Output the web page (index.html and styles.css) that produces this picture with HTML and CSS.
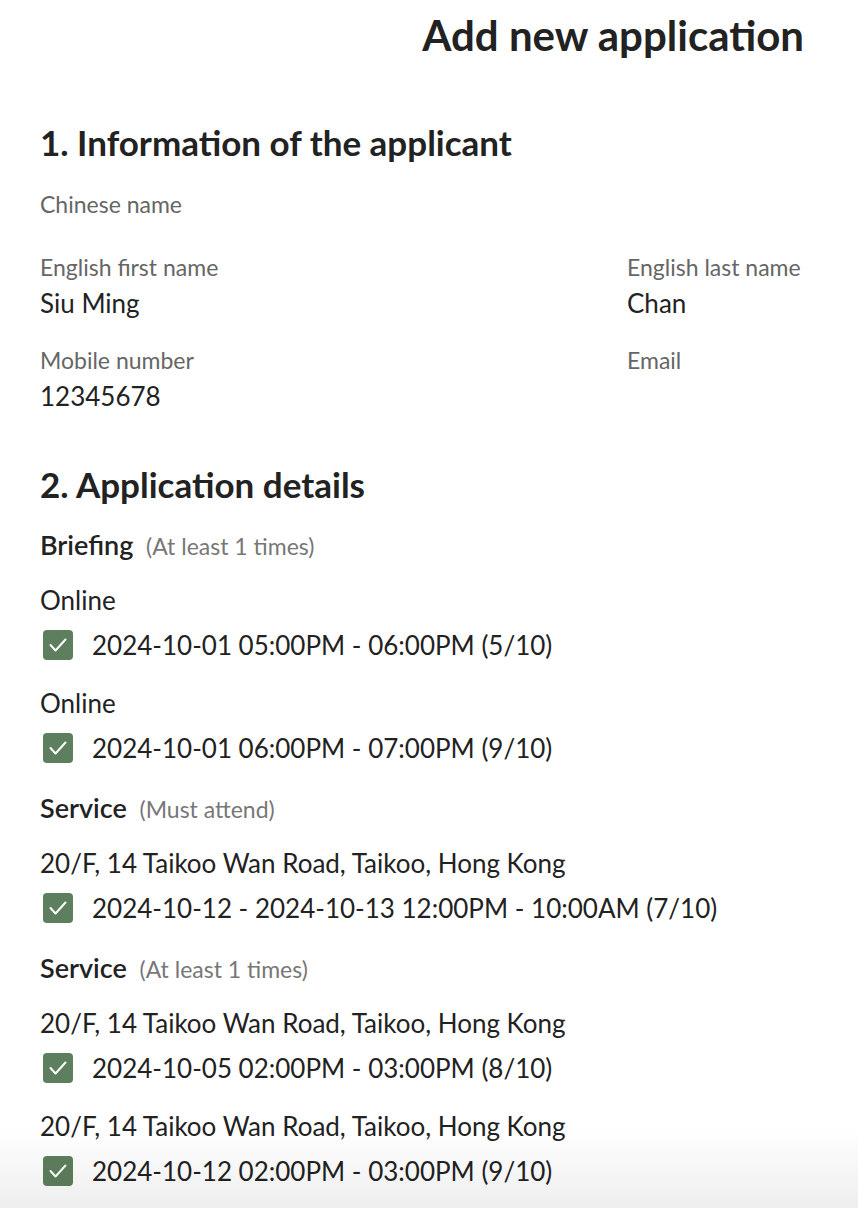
FILE: index.html
```html
<!DOCTYPE html>
<html lang="en">
<head>
<meta charset="utf-8">
<title>Add new application</title>
<link rel="stylesheet" href="styles.css">
</head>
<body>
<div class="page">
  <header class="topbar">
    <h1 class="page-title">Add new application</h1>
  </header>

  <section class="section">
    <h2 class="section-title">1. Information of the applicant</h2>
    <div class="fields">
      <div class="field field-full">
        <div class="field-label">Chinese name</div>
        <div class="field-value"></div>
      </div>
      <div class="field">
        <div class="field-label">English first name</div>
        <div class="field-value">Siu Ming</div>
      </div>
      <div class="field">
        <div class="field-label">English last name</div>
        <div class="field-value">Chan</div>
      </div>
      <div class="field">
        <div class="field-label">Mobile number</div>
        <div class="field-value">12345678</div>
      </div>
      <div class="field">
        <div class="field-label">Email</div>
        <div class="field-value"></div>
      </div>
    </div>
  </section>

  <section class="section section-details">
    <h2 class="section-title">2. Application details</h2>

    <div class="group">
      <div class="group-title">Briefing <span class="group-note">(At least 1 times)</span></div>
      <div class="option">
        <div class="option-loc">Online</div>
        <label class="option-row"><span class="check"><svg viewBox="0 0 30 30"><path d="M7.5 15 L12.5 20.5 L22.5 9.5"/></svg></span>2024-10-01 05:00PM - 06:00PM (5/10)</label>
      </div>
      <div class="option">
        <div class="option-loc">Online</div>
        <label class="option-row"><span class="check"><svg viewBox="0 0 30 30"><path d="M7.5 15 L12.5 20.5 L22.5 9.5"/></svg></span>2024-10-01 06:00PM - 07:00PM (9/10)</label>
      </div>
    </div>

    <div class="group">
      <div class="group-title">Service <span class="group-note">(Must attend)</span></div>
      <div class="option">
        <div class="option-loc">20/F, 14 Taikoo Wan Road, Taikoo, Hong Kong</div>
        <label class="option-row"><span class="check"><svg viewBox="0 0 30 30"><path d="M7.5 15 L12.5 20.5 L22.5 9.5"/></svg></span>2024-10-12 - 2024-10-13 12:00PM - 10:00AM (7/10)</label>
      </div>
    </div>

    <div class="group">
      <div class="group-title">Service <span class="group-note">(At least 1 times)</span></div>
      <div class="option">
        <div class="option-loc">20/F, 14 Taikoo Wan Road, Taikoo, Hong Kong</div>
        <label class="option-row"><span class="check"><svg viewBox="0 0 30 30"><path d="M7.5 15 L12.5 20.5 L22.5 9.5"/></svg></span>2024-10-05 02:00PM - 03:00PM (8/10)</label>
      </div>
      <div class="option">
        <div class="option-loc">20/F, 14 Taikoo Wan Road, Taikoo, Hong Kong</div>
        <label class="option-row"><span class="check"><svg viewBox="0 0 30 30"><path d="M7.5 15 L12.5 20.5 L22.5 9.5"/></svg></span>2024-10-12 02:00PM - 03:00PM (9/10)</label>
      </div>
    </div>
  </section>
</div>
<div class="bottom-fade"></div>
</body>
</html>
```

FILE: styles.css
```css
html, body {
  margin: 0;
  padding: 0;
  background: #ffffff;
}

body {
  font-family: "Lato", "Noto Sans", sans-serif;
  color: #222222;
  overflow: hidden;
}

.page {
  padding: 0 40px;
}

.topbar {
  display: flex;
  justify-content: flex-end;
  padding: 11px 14px 0 0;
}

.page-title {
  margin: 0;
  font-size: 42px;
  line-height: 48px;
  font-weight: 700;
  color: #222222;
}

.section {
  margin-top: 63px;
}

.section-title {
  margin: 0;
  font-size: 35px;
  line-height: 40px;
  font-weight: 700;
  color: #222222;
}

.fields {
  display: grid;
  grid-template-columns: 587px 1fr;
  margin-top: 30px;
}

.field {
  margin-bottom: 29px;
}

.field-full {
  grid-column: 1 / -1;
  margin-bottom: 27px;
}

.field-label {
  font-size: 23px;
  line-height: 24px;
  color: #666666;
}

.field-value {
  margin-top: 8px;
  font-size: 26px;
  line-height: 32px;
  color: #222222;
}

.field-value:empty {
  min-height: 4px;
}

.section-details {
  margin-top: 23px;
}

.section-details .section-title {
  margin-bottom: 27px;
}

.group {
  margin-bottom: 30px;
}

.group-title {
  font-size: 27px;
  line-height: 28px;
  font-weight: 600;
  color: #222222;
  margin-bottom: 26px;
}

.group-note {
  font-size: 23px;
  font-weight: 400;
  color: #777777;
  margin-left: 6px;
}

.option + .option {
  margin-top: 28px;
}

.option-loc {
  font-size: 26px;
  line-height: 28px;
  color: #222222;
  margin-bottom: 15px;
}

.option-row {
  display: flex;
  align-items: center;
  gap: 19px;
  height: 32px;
  font-size: 26px;
  color: #222222;
}

.check {
  width: 30px;
  height: 30px;
  margin-left: 3px;
  border-radius: 4px;
  background: #5e7f5e;
  display: flex;
  flex: none;
}

.check svg {
  width: 30px;
  height: 30px;
}

.check path {
  fill: none;
  stroke: #ffffff;
  stroke-width: 2;
  stroke-linecap: round;
  stroke-linejoin: round;
}

.bottom-fade {
  position: fixed;
  left: 0;
  right: 0;
  bottom: 0;
  height: 80px;
  background: linear-gradient(to bottom, rgba(0, 0, 0, 0), rgba(0, 0, 0, 0.065));
  pointer-events: none;
}
```
